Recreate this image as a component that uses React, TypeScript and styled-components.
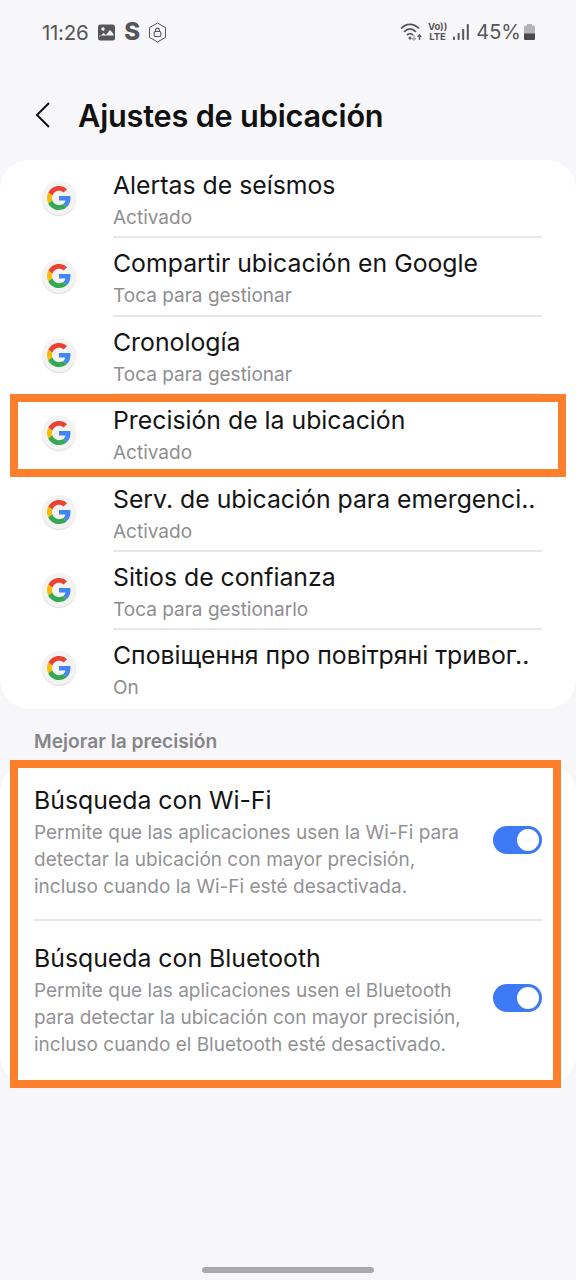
import styled, { createGlobalStyle } from 'styled-components';

const GlobalStyle = createGlobalStyle`
  html, body {
    margin: 0;
    padding: 0;
    background: #f7f7f9;
  }
  body {
    font-family: Inter, "Liberation Sans", sans-serif;
  }
`;

const Screen = styled.div`
  display: flex;
  flex-direction: column;
  width: 576px;
  height: 1280px;
  overflow: hidden;
  position: relative;
  background: #f7f7f9;
`;

const StatusBar = styled.div`
  display: flex;
  align-items: center;
  justify-content: space-between;
  height: 64px;
  padding: 0 41px 0 42px;
  color: #565658;
`;

const StatusGroup = styled.div`
  display: flex;
  align-items: center;
`;

const Clock = styled.span`
  font-size: 20.5px;
  letter-spacing: -0.3px;
  margin-right: 10px;
`;

const SkypeS = styled.span`
  font-size: 24px;
  line-height: 24px;
  font-weight: 800;
  margin: 0 8px 0 9px;
`;

const Percent = styled.span`
  font-size: 20px;
  margin: 0 3px 0 7px;
`;

const VoLte = styled.span`
  display: flex;
  flex-direction: column;
  align-items: center;
  font-size: 9.5px;
  line-height: 10px;
  font-weight: 700;
  margin: 0 6px 0 5px;
`;

const Header = styled.div`
  display: flex;
  align-items: center;
  height: 64px;
  margin-top: 19px;
  padding-left: 35px;
`;

const BackButton = styled.div`
  display: flex;
  width: 43px;
`;

const Title = styled.h1`
  margin: 0;
  font-size: 30.7px;
  font-weight: 600;
  letter-spacing: -0.2px;
  color: #111;
`;

const Card = styled.div`
  position: relative;
  background: #fff;
  border-radius: 30px;
`;

const AppList = styled(Card)`
  margin-top: 13px;
`;

const AppRow = styled.div`
  position: relative;
  display: flex;
  height: 78.4px;
  box-sizing: border-box;
  padding-left: 42px;
`;

const IconBubble = styled.div`
  display: flex;
  align-items: center;
  justify-content: center;
  flex: none;
  width: 34px;
  height: 34px;
  margin-top: 21px;
  border-radius: 50%;
  background: #f3f3f2;
  box-shadow: 0 1px 1px #dcdcdc;
`;

const AppText = styled.div<{ $last?: boolean }>`
  display: flex;
  flex-direction: column;
  flex: 1;
  margin: 0 34px 0 37px;
  padding-top: 9px;
  box-sizing: border-box;
  border-bottom: ${(p) => (p.$last ? 'none' : '2px solid #e8e8ea')};
`;

const AppName = styled.div`
  font-size: 24.8px;
  line-height: 32px;
  color: #141414;
  white-space: nowrap;
`;

const AppStatus = styled.div`
  margin-top: 3px;
  font-size: 19px;
  line-height: 28px;
  color: #8e8e90;
`;

const SectionLabel = styled.div`
  margin: 20px 0 0 34px;
  font-size: 19.2px;
  line-height: 24px;
  font-weight: 600;
  color: #86868a;
`;

const SettingsCard = styled(Card)`
  margin-top: 10px;
  padding: 0 34px;
  height: 322px;
`;

const SettingRow = styled.div<{ $last?: boolean }>`
  display: flex;
  align-items: flex-start;
  height: 158px;
  padding-top: 21px;
  box-sizing: border-box;
  border-bottom: ${(p) => (p.$last ? 'none' : '2px solid #e8e8ea')};
`;

const SettingText = styled.div`
  flex: 1;
`;

const SettingName = styled.div`
  font-size: 24.8px;
  line-height: 32px;
  color: #141414;
`;

const SettingDescription = styled.div`
  margin-top: 3px;
  font-size: 19px;
  line-height: 27px;
  color: #929294;
  white-space: pre-line;
`;

const Toggle = styled.div`
  display: flex;
  justify-content: flex-end;
  align-items: center;
  flex: none;
  width: 49px;
  height: 28px;
  margin-top: 42px;
  padding: 3px;
  box-sizing: border-box;
  border-radius: 14px;
  background: #3e79f5;
`;

const Knob = styled.div`
  width: 22px;
  height: 22px;
  border-radius: 50%;
  background: #fff;
`;

// the orange annotation boxes sit on top of the screen content
const Highlight = styled.div<{ $inset: string }>`
  position: absolute;
  inset: ${(p) => p.$inset};
  border: 8px solid #fd7f2b;
  pointer-events: none;
`;

const HomeBar = styled.div`
  position: absolute;
  left: 202px;
  bottom: 7px;
  width: 172px;
  height: 6px;
  border-radius: 3px;
  background: #a9a9ab;
`;

const GoogleIcon = () => (
  <svg width="24" height="24" viewBox="0 0 48 48">
    <path fill="#EA4335" d="M24 9.5c3.54 0 6.71 1.22 9.21 3.6l6.85-6.85C35.9 2.38 30.47 0 24 0 14.62 0 6.51 5.38 2.56 13.22l7.98 6.19C12.43 13.72 17.74 9.5 24 9.5z" />
    <path fill="#4285F4" d="M46.98 24.55c0-1.57-.15-3.09-.38-4.55H24v9.02h12.94c-.58 2.96-2.26 5.48-4.78 7.18l7.73 6c4.51-4.18 7.09-10.36 7.09-17.65z" />
    <path fill="#FBBC05" d="M10.53 28.59c-.48-1.45-.76-2.99-.76-4.59s.27-3.14.76-4.59l-7.98-6.19C.92 16.46 0 20.12 0 24c0 3.88.92 7.54 2.56 10.78l7.97-6.19z" />
    <path fill="#34A853" d="M24 48c6.48 0 11.93-2.13 15.89-5.81l-7.73-6c-2.15 1.45-4.92 2.3-8.16 2.3-6.26 0-11.57-4.22-13.47-9.91l-7.98 6.19C6.51 42.62 14.62 48 24 48z" />
  </svg>
);

const GalleryIcon = () => (
  <svg width="17" height="17" viewBox="0 0 17 17">
    <rect width="17" height="16" y="0.5" rx="2.5" fill="#565658" />
    <circle cx="5" cy="5" r="1.7" fill="#f7f7f9" />
    <path d="M1.5 13l4-4 2.5 2 4-5 3.5 4v1.5h-14z" fill="#f7f7f9" />
  </svg>
);

const HexLockIcon = () => (
  <svg width="19" height="21" viewBox="0 0 19 21" fill="none" stroke="#565658">
    <path d="M9.5 1l8 4.6v9.8l-8 4.6-8-4.6V5.6z" strokeWidth="1" />
    <rect x="6.2" y="9.5" width="6.6" height="5" rx="1" strokeWidth="1.1" />
    <path d="M7.6 9.5V8a1.9 1.9 0 0 1 3.8 0v1.5" strokeWidth="1.1" />
  </svg>
);

const WifiIcon = () => (
  <svg width="23" height="20" viewBox="0 0 23 20" fill="none">
    <path d="M1 6.5C6.5 1 13.5 1 19 6.5M4 9.8c3.8-3.6 8.2-3.6 12 0M7 13c2-1.8 4-1.8 6 0" stroke="#565658" strokeWidth="1.7" />
    <circle cx="10" cy="16" r="1.5" fill="#565658" />
    <path d="M14 13v5m-1.8-1.8L14 18l1.8-1.8" stroke="#a5a5a7" strokeWidth="1.3" />
    <path d="M19.5 18v-5m-1.8 1.8l1.8-1.8 1.8 1.8" stroke="#565658" strokeWidth="1.3" />
  </svg>
);

const SignalIcon = () => (
  <svg width="16" height="16" viewBox="0 0 16 16" fill="#565658">
    <rect x="0" y="12.5" width="2" height="3.5" rx="0.8" />
    <rect x="4.6" y="9" width="2" height="7" rx="0.8" />
    <rect x="9.2" y="5" width="2" height="11" rx="0.8" />
    <rect x="13.8" y="0" width="2" height="16" rx="0.8" />
  </svg>
);

const BatteryIcon = () => (
  <svg width="11" height="16" viewBox="0 0 11 16">
    <path d="M3 0h5v1.5h1.5A1.5 1.5 0 0 1 11 3v11.5a1.5 1.5 0 0 1-1.5 1.5h-8A1.5 1.5 0 0 1 0 14.5V3a1.5 1.5 0 0 1 1.5-1.5H3z" fill="#b4b4b6" />
    <path d="M0 9.5h11v5a1.5 1.5 0 0 1-1.5 1.5h-8A1.5 1.5 0 0 1 0 14.5z" fill="#4a4a4c" />
  </svg>
);

const apps = [
  { name: 'Alertas de seísmos', status: 'Activado' },
  { name: 'Compartir ubicación en Google', status: 'Toca para gestionar' },
  { name: 'Cronología', status: 'Toca para gestionar' },
  { name: 'Precisión de la ubicación', status: 'Activado', highlighted: true },
  { name: 'Serv. de ubicación para emergenci..', status: 'Activado' },
  { name: 'Sitios de confianza', status: 'Toca para gestionarlo' },
  { name: 'Сповіщення про повітряні тривог..', status: 'On' }
];

const scans = [
  {
    name: 'Búsqueda con Wi-Fi',
    description:
      'Permite que las aplicaciones usen la Wi-Fi para\ndetectar la ubicación con mayor precisión,\nincluso cuando la Wi-Fi esté desactivada.'
  },
  {
    name: 'Búsqueda con Bluetooth',
    description:
      'Permite que las aplicaciones usen el Bluetooth\npara detectar la ubicación con mayor precisión,\nincluso cuando el Bluetooth esté desactivado.'
  }
];

const App = () => (
  <Screen>
    <GlobalStyle />
    <StatusBar>
      <StatusGroup>
        <Clock>11:26</Clock>
        <GalleryIcon />
        <SkypeS>S</SkypeS>
        <HexLockIcon />
      </StatusGroup>
      <StatusGroup>
        <WifiIcon />
        <VoLte>
          <span>Vo))</span>
          <span>LTE</span>
        </VoLte>
        <SignalIcon />
        <Percent>45%</Percent>
        <BatteryIcon />
      </StatusGroup>
    </StatusBar>
    <Header>
      <BackButton>
        <svg width="16" height="28" viewBox="0 0 16 28" fill="none">
          <path d="M14 2L2 14l12 12" stroke="#111" strokeWidth="2" />
        </svg>
      </BackButton>
      <Title>Ajustes de ubicación</Title>
    </Header>
    <AppList>
      {apps.map((app, index) => (
        <AppRow key={app.name}>
          <IconBubble>
            <GoogleIcon />
          </IconBubble>
          <AppText $last={index === apps.length - 1}>
            <AppName>{app.name}</AppName>
            <AppStatus>{app.status}</AppStatus>
          </AppText>
          {app.highlighted && <Highlight $inset="-1px 10px -3px 10px" />}
        </AppRow>
      ))}
    </AppList>
    <SectionLabel>Mejorar la precisión</SectionLabel>
    <SettingsCard>
      {scans.map((scan, index) => (
        <SettingRow key={scan.name} $last={index === scans.length - 1}>
          <SettingText>
            <SettingName>{scan.name}</SettingName>
            <SettingDescription>{scan.description}</SettingDescription>
          </SettingText>
          <Toggle>
            <Knob />
          </Toggle>
        </SettingRow>
      ))}
      <Highlight $inset="-3px 15px -3px 10px" />
    </SettingsCard>
    <HomeBar />
  </Screen>
);

export default App;
